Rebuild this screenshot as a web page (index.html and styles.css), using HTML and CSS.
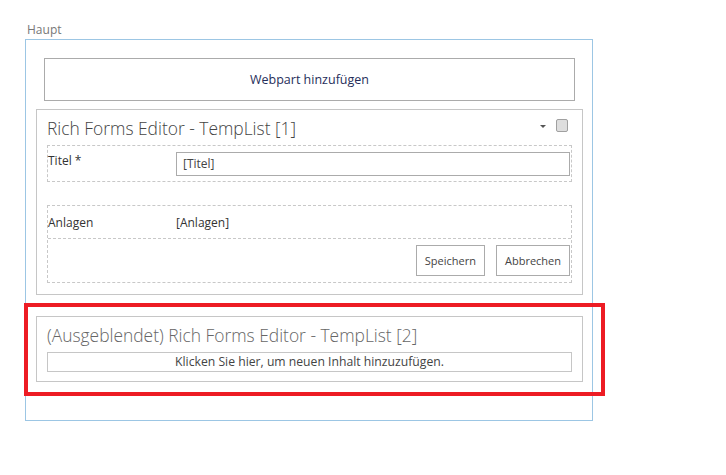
FILE: index.html
```html
<!DOCTYPE html>
<html>
<head>
<meta charset="UTF-8">
<title>Haupt</title>
<link rel="stylesheet" href="styles.css">
</head>
<body>
	<div class="page">
		<div class="zone-label">Haupt</div>
		<div class="zone">
			<div class="add-webpart">Webpart hinzufügen</div>

			<div class="webpart">
				<div class="wp-head">
					<span class="wp-title">Rich Forms Editor - TempList [1]</span>
					<span class="wp-menu"></span>
					<span class="wp-check"></span>
				</div>
				<div class="form-block">
					<div class="field">
						<div class="field-label">Titel *</div>
						<div class="field-input">[Titel]</div>
					</div>
				</div>
				<div class="form-block form-second">
					<div class="field field-line">
						<div class="field-label">Anlagen</div>
						<div class="field-value">[Anlagen]</div>
					</div>
					<div class="buttons">
						<span class="btn">Speichern</span>
						<span class="btn">Abbrechen</span>
					</div>
				</div>
			</div>

			<div class="webpart webpart-hidden">
				<div class="wp-head">
					<span class="wp-title">(Ausgeblendet) Rich Forms Editor - TempList [2]</span>
				</div>
				<div class="add-content">Klicken Sie hier, um neuen Inhalt hinzuzufügen.</div>
			</div>
		</div>
		<div class="mark"></div>
	</div>
</body>
</html>
```

FILE: styles.css
```css
body {
	margin:0;
	padding:0;
	background-color:#FFFFFF;
	font-family: "Open Sans", "Noto Sans", sans-serif;
	font-size:12px;
	color:#444444;
}

div.page {
	position:relative;
	padding-top:21px;
	padding-left:25px;
}

div.zone-label {
	padding-left:2px;
	font-size:12px;
	line-height:18px;
	color:#777777;
}

div.zone {
	box-sizing:border-box;
	width:568px;
	height:382px;
	border:1px solid #9cc6e4;
	padding:18px 10px 0 10px;
}

div.add-webpart {
	box-sizing:border-box;
	margin-left:8px;
	width:531px;
	height:43px;
	border:1px solid #ababab;
	text-align:center;
	line-height:41px;
	font-size:12.5px;
	color:#262e5a;
}

div.webpart {
	box-sizing:border-box;
	margin-top:8px;
	width:547px;
	height:186px;
	border:1px solid #c6c6c6;
	padding:0 10px;
}

div.webpart-hidden {
	margin-top:21px;
	height:66px;
}

div.wp-head {
	display:flex;
	align-items:center;
	height:35px;
}

span.wp-title {
	flex:1;
	font-size:17.4px;
	font-weight:300;
	color:#444444;
}

.webpart-hidden span.wp-title {
	color:#666666;
}

span.wp-menu {
	width:0;
	height:0;
	border-left:3px solid transparent;
	border-right:3px solid transparent;
	border-top:3px solid #555555;
	margin-right:10px;
	margin-top:-2px;
}

span.wp-check {
	box-sizing:border-box;
	width:12px;
	height:13px;
	border:1px solid #a0a0a0;
	border-radius:2px;
	background-color:#dedede;
	margin-right:4px;
	margin-top:-4px;
}

div.form-block {
	border:1px dashed #c8c8c8;
	width:523px;
}

div.field {
	display:flex;
	align-items:flex-start;
	height:35px;
}

div.field-label {
	width:128px;
	padding-top:6px;
	font-size:12px;
	color:#333333;
}

div.field-input {
	box-sizing:border-box;
	margin-top:6px;
	width:394px;
	height:24px;
	border:1px solid #ababab;
	padding-left:6px;
	line-height:22px;
	font-size:12px;
	color:#444444;
}

div.form-second {
	margin-top:23px;
	height:76px;
}

div.field-line {
	height:32px;
	align-items:center;
	border-bottom:1px dashed #c8c8c8;
}

div.field-line div.field-label {
	padding-top:0;
}

div.field-value {
	font-size:12px;
	color:#333333;
}

div.buttons {
	display:flex;
	justify-content:flex-end;
	gap:11px;
	padding-top:6px;
	padding-right:1px;
}

span.btn {
	box-sizing:border-box;
	height:31px;
	line-height:29px;
	border:1px solid #ababab;
	padding:0 8px;
	font-size:11px;
	color:#444444;
}

div.add-content {
	box-sizing:border-box;
	width:525px;
	height:20px;
	border:1px solid #c6c6c6;
	text-align:center;
	line-height:18px;
	font-size:12.2px;
	color:#444444;
}

div.mark {
	position:absolute;
	left:24px;
	top:303px;
	box-sizing:border-box;
	width:581px;
	height:93px;
	border:4px solid #ed1c24;
}
```
